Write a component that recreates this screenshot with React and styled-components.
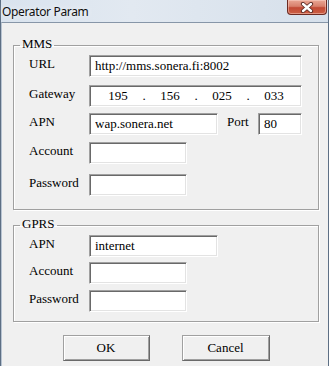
import React from "react";
import styled, { createGlobalStyle } from "styled-components";

const Global = createGlobalStyle`
  html, body { margin: 0; padding: 0; background: #dfe7ef; }
  body { width: 329px; height: 366px; overflow: hidden; }
`;

const Window = styled.div`
  width: 329px;
  height: 366px;
  box-sizing: border-box;
  display: flex;
  flex-direction: column;
  background: linear-gradient(90deg, #d9e3ee 0%, #e2e9f1 40%, #d6e0eb 100%);
  border-left: 1px solid #5d6f84;
  border-right: 1px solid #5d6f84;
`;

const TitleBar = styled.div`
  height: 22px;
  display: flex;
  align-items: flex-start;
  justify-content: space-between;
  padding: 0 0 0 1px;
`;

const Title = styled.div`
  font-family: "Noto Sans", "Open Sans", sans-serif;
  font-size: 12px;
  letter-spacing: -0.35px;
  color: #101010;
  line-height: 16px;
  padding-top: 4px;
  text-shadow: 0 0 6px rgba(255, 255, 255, 0.9);
`;

const CloseButton = styled.div`
  width: 40px;
  height: 15px;
  margin-right: 1px;
  box-sizing: border-box;
  border: 1px solid #6b2a22;
  border-top: none;
  border-radius: 0 0 4px 4px;
  background: linear-gradient(180deg, #e9a795 0%, #d8806c 45%, #c24a35 55%, #cc5f44 100%);
  box-shadow: inset 0 0 0 1px rgba(255, 220, 210, 0.45);
  display: flex;
  align-items: center;
  justify-content: center;
`;

const ClientArea = styled.div`
  flex: 1;
  background: #f0f0f0;
  border-top: 1px solid #8796a8;
  border-left: 1px solid #b8c4d2;
  padding: 13px 9px 0 11px;
  display: flex;
  flex-direction: column;
  font-family: "Liberation Serif", "Times New Roman", serif;
  font-size: 13px;
  color: #000;
`;

const Group = styled.fieldset`
  margin: ${(p) => p.$mt || 0}px 0 0 0;
  padding: 0;
  border: 1px solid #a0a0a0;
  box-shadow: 1px 1px 0 #fff, inset 1px 1px 0 #fff;
  min-width: 0;
`;

const Legend = styled.legend`
  margin-left: 6px;
  padding: 0 2px 2px 2px;
  line-height: 16px;
  font-size: 13px;
`;

const GroupBody = styled.div`
  padding: ${(p) => p.$pt}px 0 ${(p) => p.$pb}px 15px;
  display: flex;
  flex-direction: column;
`;

const Row = styled.div`
  display: flex;
  align-items: flex-start;
  height: 22px;
  margin-top: ${(p) => p.$mt || 0}px;
`;

const Label = styled.span`
  width: ${(p) => p.$w || 60}px;
  line-height: 18px;
  white-space: nowrap;
`;

const fieldStyle = `
  box-sizing: border-box;
  height: 22px;
  background: #fff;
  border-style: solid;
  border-width: 1px;
  border-color: #a0a0a0 #fff #fff #a0a0a0;
  box-shadow: inset 1px 1px 0 #696969, inset -1px -1px 0 #e3e3e3;
  font-family: "Liberation Serif", "Times New Roman", serif;
  font-size: 13px;
  color: #000;
`;

const TextField = styled.input`
  ${fieldStyle}
  width: ${(p) => p.$w}px;
  padding: 0 3px 0 5px;
  margin: 0;
  outline: none;
  line-height: 18px;
`;

const IpField = styled.div`
  ${fieldStyle}
  width: ${(p) => p.$w}px;
  display: flex;
  align-items: center;
  padding-left: 8px;
  line-height: 18px;
`;

const IpPart = styled.span`
  width: 40px;
  text-align: center;
`;

const IpDot = styled.span`
  width: 12px;
  text-align: center;
`;

const PortLabel = styled.span`
  margin: 0 0 0 9px;
  width: 31px;
  line-height: 18px;
`;

const ButtonBar = styled.div`
  display: flex;
  justify-content: center;
  gap: 32px;
  margin-top: 13px;
`;

const Button = styled.button`
  width: ${(p) => p.$w}px;
  height: 26px;
  box-sizing: border-box;
  background: #f0f0f0;
  border-style: solid;
  border-width: 1px;
  border-color: #a0a0a0 #696969 #696969 #a0a0a0;
  box-shadow: inset 1px 1px 0 #fff, inset -1px -1px 0 #a0a0a0;
  font-family: "Liberation Serif", "Times New Roman", serif;
  font-size: 13px;
  color: #000;
  padding: 0;
  line-height: 20px;
`;

function CloseIcon() {
  return (
    <svg width="14" height="11" viewBox="0 0 14 11">
      <path d="M3 2 L11 9 M11 2 L3 9" stroke="#5a2a24" strokeWidth="4.2" strokeLinecap="round" />
      <path d="M3 2 L11 9 M11 2 L3 9" stroke="#fff" strokeWidth="2.4" strokeLinecap="round" />
    </svg>
  );
}

export default function App() {
  return (
    <>
      <Global />
      <Window>
        <TitleBar>
          <Title>Operator Param</Title>
          <CloseButton>
            <CloseIcon />
          </CloseButton>
        </TitleBar>
        <ClientArea>
          <Group>
            <Legend>MMS</Legend>
            <GroupBody $pt={1} $pb={13}>
              <Row $mt={0}>
                <Label>URL</Label>
                <TextField $w={213} readOnly defaultValue="http://mms.sonera.fi:8002" />
              </Row>
              <Row $mt={8}>
                <Label>Gateway</Label>
                <IpField $w={213}>
                  <IpPart>195</IpPart>
                  <IpDot>.</IpDot>
                  <IpPart>156</IpPart>
                  <IpDot>.</IpDot>
                  <IpPart>025</IpPart>
                  <IpDot>.</IpDot>
                  <IpPart>033</IpPart>
                </IpField>
              </Row>
              <Row $mt={6}>
                <Label>APN</Label>
                <TextField $w={129} readOnly defaultValue="wap.sonera.net" />
                <PortLabel>Port</PortLabel>
                <TextField $w={44} readOnly defaultValue="80" />
              </Row>
              <Row $mt={7}>
                <Label>Account</Label>
                <TextField $w={98} readOnly defaultValue="" />
              </Row>
              <Row $mt={10}>
                <Label>Password</Label>
                <TextField $w={98} readOnly defaultValue="" />
              </Row>
            </GroupBody>
          </Group>
          <Group $mt={6}>
            <Legend>GPRS</Legend>
            <GroupBody $pt={1} $pb={9}>
              <Row $mt={0}>
                <Label>APN</Label>
                <TextField $w={129} readOnly defaultValue="internet" />
              </Row>
              <Row $mt={5}>
                <Label>Account</Label>
                <TextField $w={98} readOnly defaultValue="" />
              </Row>
              <Row $mt={6}>
                <Label>Password</Label>
                <TextField $w={98} readOnly defaultValue="" />
              </Row>
            </GroupBody>
          </Group>
          <ButtonBar>
            <Button $w={87}>OK</Button>
            <Button $w={88}>Cancel</Button>
          </ButtonBar>
        </ClientArea>
      </Window>
    </>
  );
}
